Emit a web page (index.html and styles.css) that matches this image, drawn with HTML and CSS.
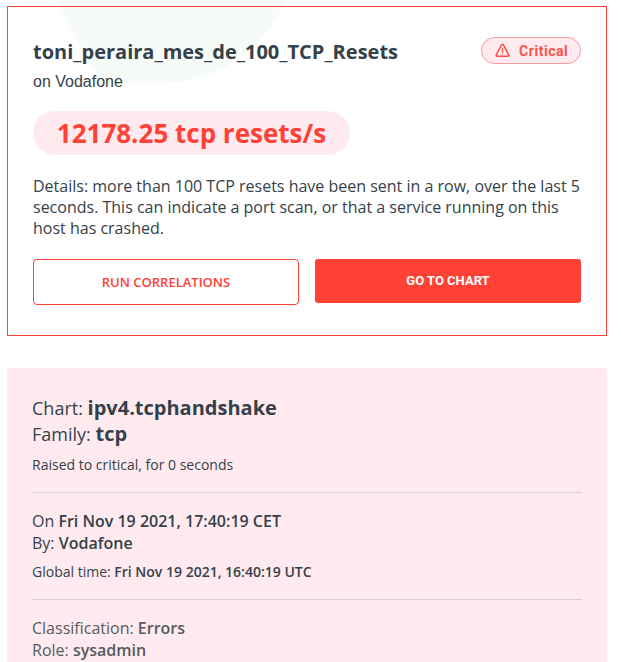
FILE: index.html
```html
<!DOCTYPE html>
<html lang="en"><head><meta charset="utf-8"><title>Alert</title><link rel="stylesheet" href="styles.css"></head>
<body>
<svg class="backdrop" width="300" height="90" viewBox="0 0 300 90" aria-hidden="true"><path d="M56 0 90 64Q99 81 110 82Q135 83.500 163 83C215 83 265 50 286 0Z" fill="#f6fbf7"/></svg>
<main class="page">
<section class="alert">
<header class="head"><h1 class="title">toni_peraira_mes_de_100_TCP_Resets</h1>
<span class="badge"><svg class="icon" viewBox="0 0 15 15" width="15" height="15" fill="none" stroke="currentColor" stroke-width="1.5" stroke-linejoin="round" stroke-linecap="round"><path d="M6.600 1.900Q7.500.7 8.400 1.900L13.700 11.800Q14.300 13.300 12.800 13.300H2.200Q.7 13.300 1.300 11.800Z"/><path d="M7.500 5.700v3.500M7.500 11v.1" stroke-width="1.200"/></svg>Critical</span></header>
<p class="host">on Vodafone</p>
<div class="value">12178.25 tcp resets/s</div>
<p class="details">Details: more than 100 TCP resets have been sent in a row, over the last 5 seconds. This can indicate a port scan, or that a service running on this host has crashed.</p>
<div class="actions"><a class="btn outline">RUN CORRELATIONS</a><a class="btn solid">GO TO CHART</a></div>
</section>
<section class="info">
<div class="group chart"><p class="large">Chart: <b>ipv4.tcphandshake</b></p><p class="large">Family: <b>tcp</b></p><p class="small">Raised to critical, for 0 seconds</p></div>
<div class="group"><p class="medium">On <b>Fri Nov 19 2021, 17:40:19 CET</b></p><p class="medium">By: <b>Vodafone</b></p><p class="small">Global time: <b>Fri Nov 19 2021, 16:40:19 UTC</b></p></div>
<div class="group muted"><p class="medium">Classification: <b>Errors</b></p><p class="medium">Role: <b>sysadmin</b></p></div>
</section>
</main></body></html>
```

FILE: styles.css
```css
* { box-sizing: border-box; }
body { margin: 0; background: #fff; color: #35414a; font-family: "Open Sans", sans-serif; }
h1, p { margin: 0; }
b { font-weight: 600; }
.backdrop { position: absolute; top: 0; left: 0; z-index: -1; }
.page { width: 607px; padding: 6px 0 0 7px; }
.alert { height: 330px; padding: 29px 25px; border: 1px solid #ff4136; }
.head { display: flex; justify-content: space-between; }
.title { font-size: 20px; line-height: 32px; font-weight: 700; }
.badge { display: flex; align-items: center; padding-left: 13px; gap: 9px; width: 100px; height: 27px; margin-top: 1px; border: 1px solid #f59a9d; border-radius: 14px; background: #ffebef; color: #ff4f49; font-family: Roboto, sans-serif; font-size: 14px; font-weight: 700; letter-spacing: .55px; }
.icon { margin-top: -1px; }
.host { font: 16px/24px "Liberation Sans", sans-serif; margin-top: 2px; }
.value { width: 317px; height: 44px; margin-top: 17px; border-radius: 22px; background: #ffebef; color: #ff4136; font-size: 26px; line-height: 44px; font-weight: 700; text-align: center; }
.details { margin-top: 21px; font-size: 16px; line-height: 21px; }
.actions { display: grid; grid-template-columns: 266px 266px; gap: 16px; margin-top: 20px; }
.btn { display: flex; align-items: center; justify-content: center; font-size: 13px; }
.outline { height: 46px; border: 1px solid #ff4136; border-radius: 4px; color: #ff4136; font-weight: 600; }
.solid { height: 44px; padding-bottom: 2px; border-radius: 3px; background: #ff4136; color: #fff; font-family: Roboto, sans-serif; font-weight: 700; }
.info { height: 294px; margin-top: 32px; padding: 27px 25px 0; border-radius: 3px 3px 0 0; background: #ffebef; }
.group { height: 107px; padding-top: 17px; border-bottom: 1px solid #d5d0d1; }
.group.chart { height: 98px; padding: 0; }
.large { font-size: 18px; line-height: 26px; }
.large b { font-size: 20px; font-weight: 700; }
.medium { font-size: 16px; line-height: 22px; }
.small { font-size: 14px; line-height: 20px; margin-top: 8px; }
.group.muted { height: 62px; color: #555b60; border: 0; }
```
